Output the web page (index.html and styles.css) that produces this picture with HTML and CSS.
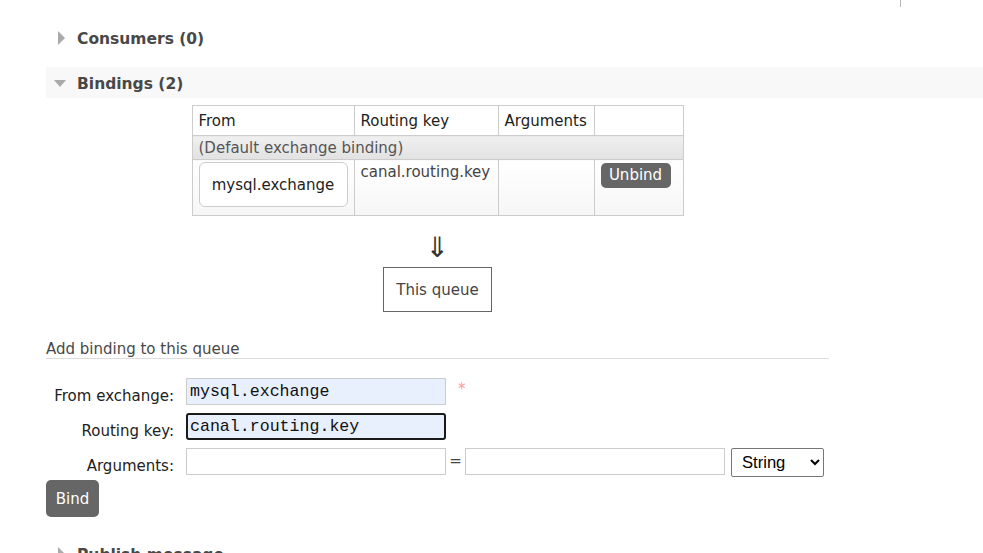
FILE: index.html
```html
<!DOCTYPE html>
<html>
<head>
<meta charset="utf-8">
<link rel="stylesheet" href="styles.css">
</head>
<body>
<div class="topline"></div>
<div class="page">
  <div class="section">
    <h2 class="sec-head closed"><span class="tri tri-right"></span>Consumers (0)</h2>
  </div>
  <div class="section">
    <h2 class="sec-head open"><span class="tri tri-down"></span>Bindings (2)</h2>
    <div class="bindings">
      <table class="btable">
        <thead>
          <tr><th class="c1">From</th><th class="c2">Routing key</th><th class="c3">Arguments</th><th class="c4"></th></tr>
        </thead>
        <tbody>
          <tr class="default-row"><td colspan="4">(Default exchange binding)</td></tr>
          <tr class="brow">
            <td><span class="exch">mysql.exchange</span></td>
            <td class="rk">canal.routing.key</td>
            <td></td>
            <td><button class="btn unbind">Unbind</button></td>
          </tr>
        </tbody>
      </table>
      <div class="arrow">&#8659;</div>
      <div class="thisq">This queue</div>
    </div>
    <h3 class="subhead">Add binding to this queue</h3>
    <div class="form">
      <label class="lbl">From exchange:</label>
      <div class="fld"><input class="inp auto" type="text" value="mysql.exchange"><span class="req">*</span></div>
      <label class="lbl">Routing key:</label>
      <div class="fld"><input class="inp auto focus" type="text" value="canal.routing.key"></div>
      <label class="lbl">Arguments:</label>
      <div class="fld"><input class="inp" type="text"><span class="eq">=</span><input class="inp" type="text"><select class="sel"><option>String</option></select></div>
    </div>
    <button class="btn bind">Bind</button>
  </div>
  <div class="section last">
    <h2 class="sec-head closed"><span class="tri tri-right"></span>Publish message</h2>
  </div>
</div>
</body>
</html>
```
FILE: styles.css
```css
html, body { margin: 0; padding: 0; background: #fff; }
body { font-family: "DejaVu Sans", Verdana, sans-serif; font-size: 15px; color: #484848; overflow: hidden; height: 553px; }
.topline { width: 900px; height: 7px; border-right: 1px solid #bbb; }
.page { padding-left: 46px; }
.section { margin-top: 15px; }
.section + .section { margin-top: 14px; }
.section.last { margin-top: 21px; }
.sec-head { margin: 0; height: 28px; padding-top: 3px; line-height: 28px; font-size: 15.5px; font-weight: bold; color: #484848; padding-left: 31px; position: relative; }
.sec-head.open { background: #f8f8f8; }
.tri { position: absolute; width: 0; height: 0; }
.tri-right { left: 12px; top: 9px; border-top: 7px solid transparent; border-bottom: 7px solid transparent; border-left: 7px solid #aaa; }
.tri-down { left: 8px; top: 13px; border-left: 6.5px solid transparent; border-right: 6.5px solid transparent; border-top: 7px solid #aaa; }
.bindings { width: 491px; margin-left: 146px; margin-top: 7px; display: flex; flex-direction: column; align-items: center; }
.btable { border-collapse: collapse; width: 491px; table-layout: fixed; color: #222; }
.btable th, .btable td { border: 1px solid #ccc; text-align: left; padding: 0 6px; font-weight: normal; }
.btable th { height: 29px; }
.c1 { width: 149px; } .c2 { width: 131px; } .c3 { width: 83px; } .c4 { width: 76px; }
.default-row td { height: 23px; background: linear-gradient(#f0f0f0, #e2e2e2); color: #555; }
.brow td { height: 52px; vertical-align: top; padding-top: 2px; padding-bottom: 0; background: linear-gradient(#fff, #f6f6f6); color: #444; }
.brow td.rk { padding-top: 3px; }
.exch { display: flex; align-items: center; justify-content: center; width: 147px; height: 43px; border: 1px solid #ccc; border-radius: 6px; background: #fff; color: #222; }
.btn { font-family: "DejaVu Sans", Verdana, sans-serif; font-size: 15px; color: #fff; background: #666; border: 0; cursor: pointer; }
.unbind { margin-top: 1px; width: 70px; height: 25px; border-radius: 5px; padding: 0; line-height: 25px; }
.arrow { margin-top: 18px; font-size: 28px; line-height: 28px; height: 28px; color: #333; }
.thisq { margin-top: 5px; width: 107px; height: 43px; border: 1px solid #666; display: flex; align-items: center; justify-content: center; color: #444; }
.subhead { margin: 28px 0 0; width: 783px; font-size: 15px; font-weight: normal; color: #484848; border-bottom: 1px solid #ddd; padding-bottom: 0; line-height: 18px; }
.form { display: grid; grid-template-columns: 128px auto; column-gap: 12px; row-gap: 8px; margin-top: 19px; align-items: start; }
.lbl { text-align: right; color: #222; padding-top: 9px; line-height: 18px; }
.fld { display: flex; align-items: flex-start; position: relative; }
.inp { box-sizing: border-box; width: 260px; height: 27px; border: 1px solid #ccc; padding: 0 3px; font-family: "Liberation Mono", "Courier New", monospace; font-size: 16.6px; color: #111; background: #fff; margin: 0; outline: none; }
.inp.auto { background: #e8f0fe; }
.inp.focus { border: 2px solid #1a1a1a; border-radius: 3px; padding: 0 2px; }
.req { color: #f55; font-size: 15px; margin-left: 12px; margin-top: 2px; opacity: 0.6; }
.eq { width: 19px; text-align: center; color: #444; line-height: 27px; }
.sel { margin-left: 6px; box-sizing: border-box; width: 93px; height: 29px; font-family: "Liberation Sans", Arial, sans-serif; font-size: 16.6px; border: 1px solid #767676; border-radius: 2px; background: #fff; color: #000; padding-left: 6px; }
.bind { margin-top: 3px; width: 53px; height: 37px; border-radius: 5px; padding: 0; display: block; }
```
